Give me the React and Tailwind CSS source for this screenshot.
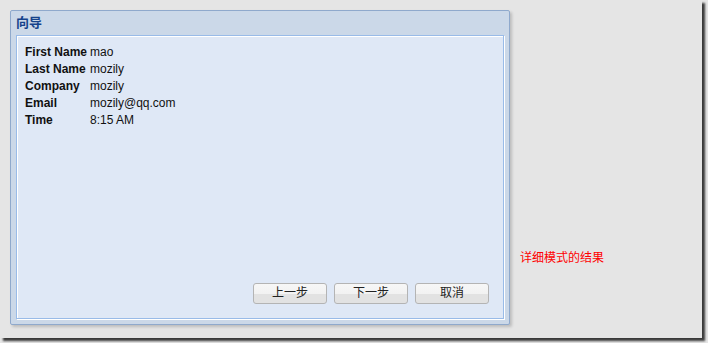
import React from 'react';

const rows = [
  { label: 'First Name', value: 'mao' },
  { label: 'Last Name', value: 'mozily' },
  { label: 'Company', value: 'mozily' },
  { label: 'Email', value: 'mozily@qq.com' },
  { label: 'Time', value: '8:15 AM' },
];

const cjk = "font-['Liberation_Sans','Noto_Sans_CJK_SC',sans-serif]";

const WizardButton = ({ children }) => (
  <button
    className={`w-[74px] h-[21px] rounded-[3px] border border-[#b4b4b4] text-[12px] leading-[19px] text-[#222] bg-[linear-gradient(#f7f7f7_0%,#f2f2f2_50%,#e2e2e2_50%,#e2e2e2_100%)] ${cjk}`}
  >
    {children}
  </button>
);

const App = () => {
  return (
    <div className="w-[708px] h-[343px] bg-[#e6e6e6] overflow-hidden">
      <div className="w-[702px] h-[338px] bg-[#e5e5e5] shadow-[3px_3px_2px_rgba(0,0,0,0.75)] flex items-start pt-[10px] pl-[10px]">
        <div className="w-[500px] h-[315px] flex flex-col rounded-[2px] border border-[#8fa9cc] bg-[#cbd8e8] shadow-[2px_2px_3px_rgba(0,0,0,0.18)] px-[5px] pb-[5px]">
          <div
            className={`h-[24px] shrink-0 flex items-center pl-[0px] text-[13px] font-bold text-[#15428b] ${cjk}`}
          >
            向导
          </div>
          <div className="flex-1 flex flex-col border border-[#99bbe8] bg-[#dfe8f6] shadow-[inset_1px_1px_0_#ffffff,1px_1px_0_#ffffff] pt-[7px] pl-[8px] pr-[14px] pb-[14px]">
            <div className="flex flex-col font-['Liberation_Sans',sans-serif] text-[12px] text-[#111]">
              {rows.map((r) => (
                <div key={r.label} className="flex h-[17px] items-center">
                  <span className="w-[65px] font-bold shrink-0 whitespace-nowrap">{r.label}</span>
                  <span>{r.value}</span>
                </div>
              ))}
            </div>
            <div className="mt-auto flex justify-end gap-[7px]">
              <WizardButton>上一步</WizardButton>
              <WizardButton>下一步</WizardButton>
              <WizardButton>取消</WizardButton>
            </div>
          </div>
        </div>
        <div className={`ml-[10px] mt-[239px] text-[12px] text-[#ff0000] ${cjk}`}>
          详细模式的结果
        </div>
      </div>
    </div>
  );
};

export default App;
